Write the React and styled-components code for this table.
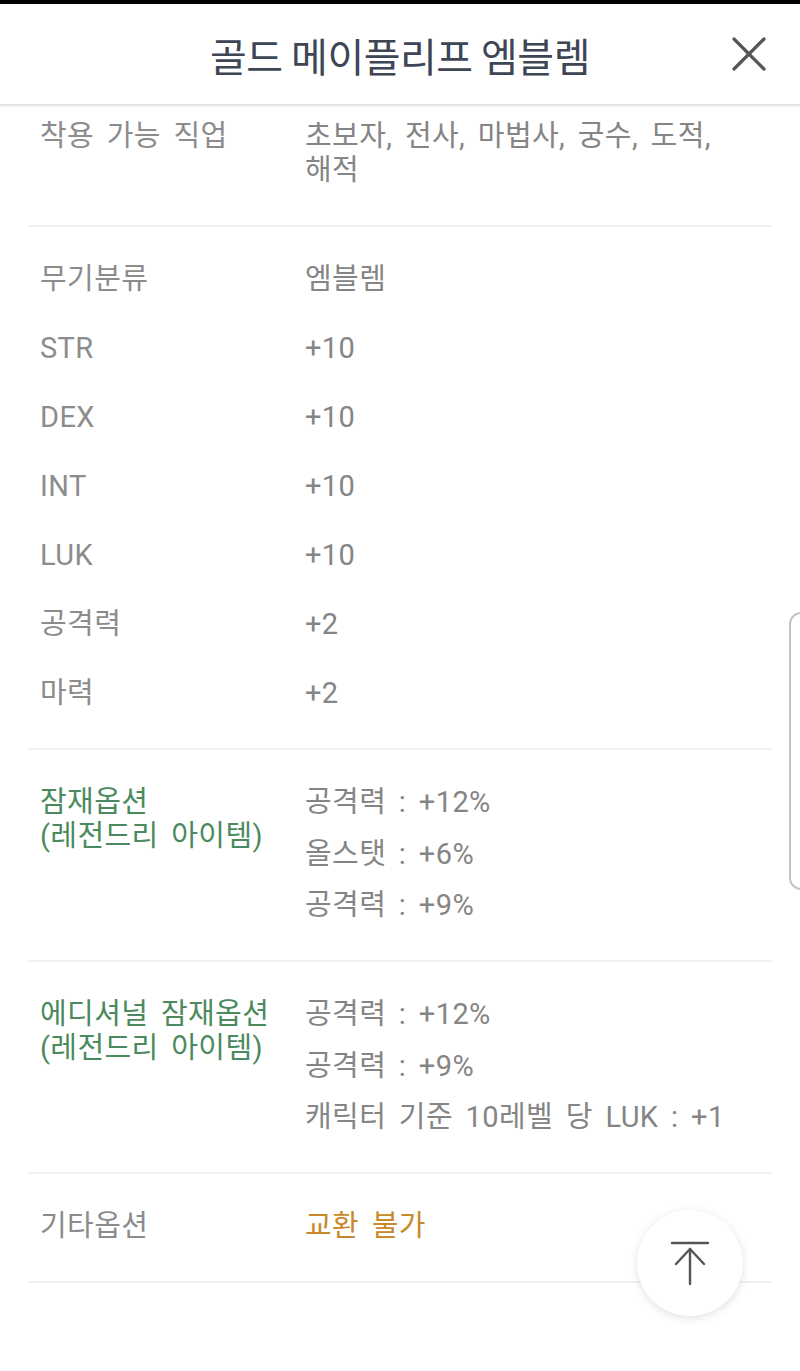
import styled, { createGlobalStyle } from "styled-components";

const GlobalStyle = createGlobalStyle`
    body {
        margin: 0;
        background: #ffffff;
        font-family: Roboto, "Noto Sans CJK KR", sans-serif;
    }
`

const basicRows = [
    ["무기분류", "엠블렘"],
    ["STR", "+10"],
    ["DEX", "+10"],
    ["INT", "+10"],
    ["LUK", "+10"],
    ["공격력", "+2"],
    ["마력", "+2"],
]

const potential = ["공격력 : +12%", "올스탯 : +6%", "공격력 : +9%"]
const additional = ["공격력 : +12%", "공격력 : +9%", "캐릭터 기준 10레벨 당 LUK : +1"]

const ArrowTopIcon = () => (
    <svg width="40" height="46" viewBox="0 0 40 46" fill="none" stroke="#555" strokeWidth="2.4" strokeLinecap="round" strokeLinejoin="round">
        <line x1="2" y1="3" x2="38" y2="3" />
        <line x1="20" y1="9" x2="20" y2="44" />
        <polyline points="6,24 20,9 34,24" />
    </svg>
)

const CloseIcon = () => (
    <svg width="34" height="34" viewBox="0 0 34 34" stroke="#555" strokeWidth="3.2" strokeLinecap="round">
        <line x1="2" y1="2" x2="32" y2="32" />
        <line x1="32" y1="2" x2="2" y2="32" />
    </svg>
)

const App = () => {
    return (
        <Page>
            <GlobalStyle />
            <StatusStrip />
            <Header>
                <span />
                <Title>골드 메이플리프 엠블렘</Title>
                <CloseButton aria-label="닫기"><CloseIcon /></CloseButton>
            </Header>

            <Content>
                <Section $top={13}>
                    <Row>
                        <Label>착용 가능 직업</Label>
                        <Value>초보자, 전사, 마법사, 궁수, 도적,<br />해적</Value>
                    </Row>
                </Section>

                <Section $gap={35}>
                    {basicRows.map(([label, value]) => (
                        <Row key={label}>
                            <Label>{label}</Label>
                            <Value>{value}</Value>
                        </Row>
                    ))}
                </Section>

                <Section>
                    <Row>
                        <Label $tone="green">잠재옵션<br />(레전드리 아이템)</Label>
                        <ValueList>
                            {potential.map((v, i) => <Value key={i}>{v}</Value>)}
                        </ValueList>
                    </Row>
                </Section>

                <Section>
                    <Row>
                        <Label $tone="green">에디셔널 잠재옵션<br />(레전드리 아이템)</Label>
                        <ValueList>
                            {additional.map((v, i) => <Value key={i}>{v}</Value>)}
                        </ValueList>
                    </Row>
                </Section>

                <Section>
                    <Row>
                        <Label>기타옵션</Label>
                        <Value $tone="orange">교환 불가</Value>
                    </Row>
                </Section>
            </Content>

            <TopButton aria-label="맨 위로"><ArrowTopIcon /></TopButton>
            <EdgeHandle />
        </Page>
    )
}

export default App

const Page = styled.div`
    position: relative;
    width: 800px;
    height: 1371px;
    overflow: hidden;
    background: #ffffff;
`

const StatusStrip = styled.div`
    height: 4px;
    background: #000000;
`

const Header = styled.header`
    height: 100px;
    display: grid;
    grid-template-columns: 1fr auto 1fr;
    align-items: center;
    border-bottom: 2px solid #e4e4e4;
    box-shadow: 0 1px 2px rgba(0, 0, 0, 0.05);
`

const Title = styled.h1`
    margin: 0;
    font-family: "Noto Sans CJK KR", sans-serif;
    font-size: 40px;
    font-weight: 400;
    color: #3d4654;
    letter-spacing: -0.5px;
    padding-top: 2px;
`

const CloseButton = styled.button`
    justify-self: end;
    margin-right: 33px;
    width: 36px;
    height: 36px;
    padding: 0;
    border: none;
    background: none;
    display: flex;
    align-items: center;
    justify-content: center;
`

const Content = styled.main`
    padding: 0 28px;
`

const Section = styled.section`
    display: flex;
    flex-direction: column;
    gap: ${p => p.$gap ?? 0}px;
    padding: ${p => p.$top ?? 35}px 0 38px;
    border-bottom: 2px solid #f1f1f1;
`

const Row = styled.div`
    display: grid;
    grid-template-columns: 265px 1fr;
    padding-left: 12px;
    font-size: 29px;
    line-height: 34px;
    letter-spacing: 0.4px;
    word-spacing: 5px;
`

const Label = styled.div`
    color: ${p => p.$tone === "green" ? "#4b8a5e" : "#8c8c8c"};
`

const ValueList = styled.div`
    display: flex;
    flex-direction: column;
    gap: 17.5px;
`

const Value = styled.div`
    color: ${p => p.$tone === "orange" ? "#c8892a" : "#858585"};
`

const TopButton = styled.button`
    position: absolute;
    right: 57px;
    bottom: 55px;
    width: 106px;
    height: 106px;
    border-radius: 50%;
    border: none;
    background: #ffffff;
    box-shadow: 0 2px 8px rgba(0, 0, 0, 0.12);
    display: flex;
    align-items: center;
    justify-content: center;
    padding: 0;
`

const EdgeHandle = styled.div`
    position: absolute;
    left: 789px;
    top: 612px;
    width: 30px;
    height: 274px;
    border: 2px solid #c4c4c4;
    border-radius: 12px;
    background: #ffffff;
`
